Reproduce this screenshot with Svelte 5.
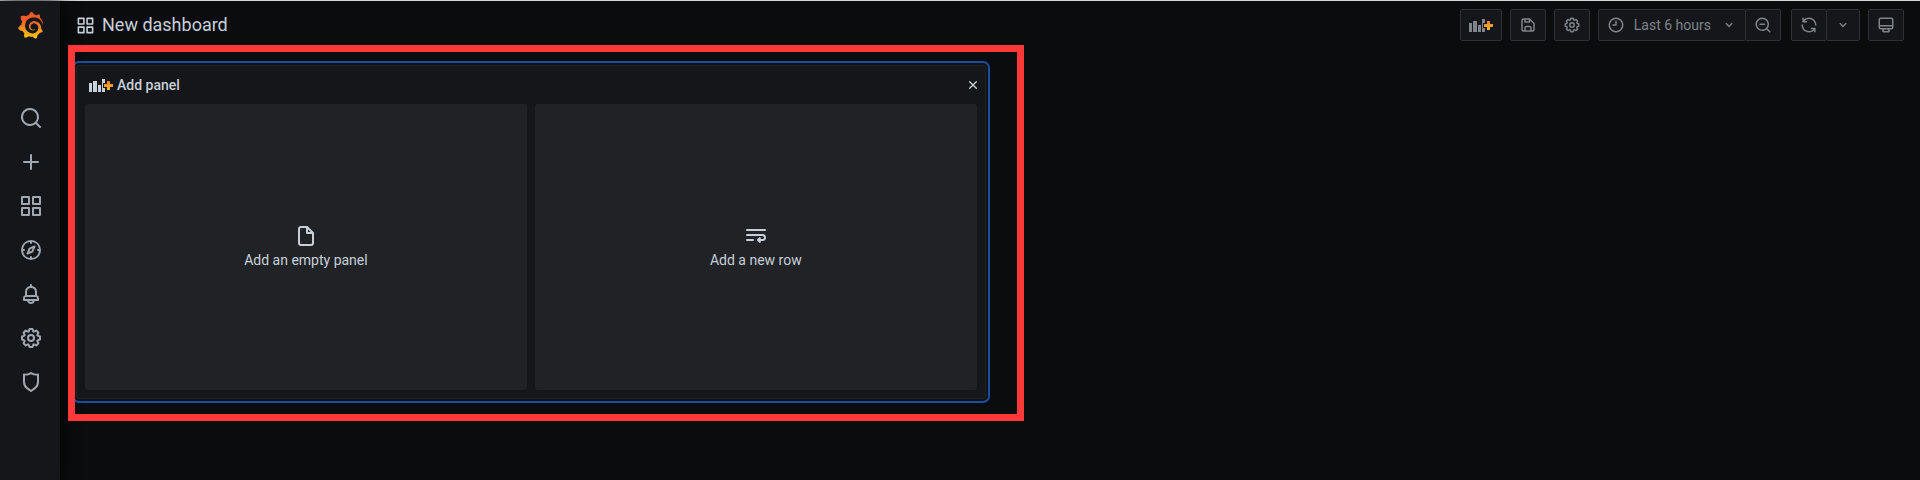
<script>
  const search = 'M21.71,20.29,18,16.61A9,9,0,1,0,16.61,18l3.68,3.68a1,1,0,0,0,1.42,0A1,1,0,0,0,21.71,20.29ZM11,18a7,7,0,1,1,7-7A7,7,0,0,1,11,18Z';
  const icons = {
    search,
    zoomOut: search + 'M14,10H8a1,1,0,0,0,0,2h6a1,1,0,0,0,0-2Z',
    plus: 'M19,11H13V5a1,1,0,0,0-2,0v6H5a1,1,0,0,0,0,2h6v6a1,1,0,0,0,2,0V13h6a1,1,0,0,0,0-2Z',
    apps: 'M10,13H3a1,1,0,0,0-1,1v7a1,1,0,0,0,1,1h7a1,1,0,0,0,1-1V14A1,1,0,0,0,10,13ZM9,20H4V15H9ZM21,2H14a1,1,0,0,0-1,1v7a1,1,0,0,0,1,1h7a1,1,0,0,0,1-1V3A1,1,0,0,0,21,2ZM20,9H15V4h5ZM21,13H14a1,1,0,0,0-1,1v7a1,1,0,0,0,1,1h7a1,1,0,0,0,1-1V14A1,1,0,0,0,21,13ZM20,20H15V15h5ZM10,2H3A1,1,0,0,0,2,3v7a1,1,0,0,0,1,1h7a1,1,0,0,0,1-1V3A1,1,0,0,0,10,2ZM9,9H4V4H9Z',
    compass: 'M12,2A10,10,0,1,0,22,12,10,10,0,0,0,12,2Zm1,17.93V19a1,1,0,0,0-2,0v.93A8,8,0,0,1,4.07,13H5a1,1,0,0,0,0-2H4.07A8,8,0,0,1,11,4.07V5a1,1,0,0,0,2,0V4.07A8,8,0,0,1,19.93,11H19a1,1,0,0,0,0,2h.93A8,8,0,0,1,13,19.93ZM15.14,7.55l-5,2.12a1,1,0,0,0-.52.52l-2.12,5a1,1,0,0,0,.21,1.1,1,1,0,0,0,.7.3.93.93,0,0,0,.4-.09l5-2.12a1,1,0,0,0,.52-.52l2.12-5a1,1,0,0,0-1.31-1.31Zm-2.49,5.1-2.28,1,1-2.28,2.28-1Z',
    bell: 'M18,13.18V10a6,6,0,0,0-5-5.91V3a1,1,0,0,0-2,0V4.09A6,6,0,0,0,6,10v3.18A3,3,0,0,0,4,16v2a1,1,0,0,0,1,1H8.14a4,4,0,0,0,7.72,0H19a1,1,0,0,0,1-1V16A3,3,0,0,0,18,13.18ZM8,10a4,4,0,0,1,8,0v3H8Zm4,10a2,2,0,0,1-1.72-1h3.44A2,2,0,0,1,12,20Zm6-3H6V16a1,1,0,0,1,1-1H17a1,1,0,0,1,1,1Z',
    cog: 'M21.32,9.55l-1.89-.63.89-1.78A1,1,0,0,0,20.13,6L18,3.87a1,1,0,0,0-1.15-.19l-1.78.89-.63-1.89A1,1,0,0,0,13.5,2h-3a1,1,0,0,0-.95.68L8.92,4.57,7.14,3.68A1,1,0,0,0,6,3.87L3.87,6a1,1,0,0,0-.19,1.15l.89,1.78-1.89.63A1,1,0,0,0,2,10.5v3a1,1,0,0,0,.68.95l1.89.63-.89,1.78A1,1,0,0,0,3.87,18L6,20.13a1,1,0,0,0,1.15.19l1.78-.89.63,1.89a1,1,0,0,0,.95.68h3a1,1,0,0,0,.95-.68l.63-1.89,1.78.89A1,1,0,0,0,18,20.13L20.13,18a1,1,0,0,0,.19-1.15l-.89-1.78,1.89-.63A1,1,0,0,0,22,13.5v-3A1,1,0,0,0,21.32,9.55ZM20,12.78l-1.2.4A2,2,0,0,0,17.64,16l.57,1.14-1.1,1.1L16,17.64a2,2,0,0,0-2.79,1.16l-.4,1.2H11.22l-.4-1.2A2,2,0,0,0,8,17.64l-1.14.57-1.1-1.1L6.36,16A2,2,0,0,0,5.2,13.18L4,12.78V11.22l1.2-.4A2,2,0,0,0,6.36,8L5.79,6.89l1.1-1.1L8,6.36A2,2,0,0,0,10.82,5.2l.4-1.2h1.56l.4,1.2A2,2,0,0,0,16,6.36l1.14-.57,1.1,1.1L17.64,8a2,2,0,0,0,1.16,2.79l1.2.4ZM12,8a4,4,0,1,0,4,4A4,4,0,0,0,12,8Zm0,6a2,2,0,1,1,2-2A2,2,0,0,1,12,14Z',
    shield: 'M19.63,3.65a1,1,0,0,0-.84-.2,8,8,0,0,1-6.22-1.27,1,1,0,0,0-1.14,0A8,8,0,0,1,5.21,3.45a1,1,0,0,0-.84.2A1,1,0,0,0,4,4.43v7.45a9,9,0,0,0,3.77,7.33l3.65,2.6a1,1,0,0,0,1.16,0l3.65-2.6A9,9,0,0,0,20,11.88V4.43A1,1,0,0,0,19.63,3.65ZM18,11.88a7,7,0,0,1-2.93,5.7L12,19.77,8.93,17.58A7,7,0,0,1,6,11.88V5.58a10,10,0,0,0,6-1.39,10,10,0,0,0,6,1.39Z',
    save: 'M20.71,9.29l-6-6a1,1,0,0,0-.32-.21A1.09,1.09,0,0,0,14,3H6A3,3,0,0,0,3,6V18a3,3,0,0,0,3,3H18a3,3,0,0,0,3-3V10A1,1,0,0,0,20.71,9.29ZM9,5h4V7H9Zm6,14H9V16a1,1,0,0,1,1-1h4a1,1,0,0,1,1,1Zm4-1a1,1,0,0,1-1,1H17V16a3,3,0,0,0-3-3H10a3,3,0,0,0-3,3v3H6a1,1,0,0,1-1-1V6A1,1,0,0,1,6,5H7V8A1,1,0,0,0,8,9h6a1,1,0,0,0,1-1V6.41l4,4Z',
    clock: 'M12,2A10,10,0,1,0,22,12,10,10,0,0,0,12,2Zm0,18a8,8,0,1,1,8-8A8,8,0,0,1,12,20ZM12,6a1,1,0,0,0-1,1v4H8a1,1,0,0,0,0,2h4a1,1,0,0,0,1-1V7A1,1,0,0,0,12,6Z',
    down: 'M17,9.17a1,1,0,0,0-1.41,0L12,12.71,8.46,9.17a1,1,0,0,0-1.41,0,1,1,0,0,0,0,1.42l4.24,4.24a1,1,0,0,0,1.42,0L17,10.59A1,1,0,0,0,17,9.17Z',
    sync: 'M19.91,15.51H15.38a1,1,0,0,0,0,2h2.4A8,8,0,0,1,4,12a1,1,0,0,0-2,0,10,10,0,0,0,16.88,7.23V21a1,1,0,0,0,2,0V16.5A1,1,0,0,0,19.91,15.51ZM12,2A10,10,0,0,0,5.12,4.77V3a1,1,0,0,0-2,0V7.5a1,1,0,0,0,1,1h4.5a1,1,0,0,0,0-2H6.22A8,8,0,0,1,20,12a1,1,0,0,0,2,0A10,10,0,0,0,12,2Z',
    monitor: 'M19,2H5A3,3,0,0,0,2,5V15a3,3,0,0,0,3,3H7.64l-.58,1a2,2,0,0,0,0,2,2,2,0,0,0,1.75,1h6.46A2,2,0,0,0,17,21a2,2,0,0,0,0-2l-.59-1H19a3,3,0,0,0,3-3V5A3,3,0,0,0,19,2ZM8.77,20,10,18H14l1.2,2ZM20,15a1,1,0,0,1-1,1H5a1,1,0,0,1-1-1V14H20Zm0-3H4V5A1,1,0,0,1,5,4H19a1,1,0,0,1,1,1Z',
    times: 'M13.41,12l4.3-4.29a1,1,0,1,0-1.42-1.42L12,10.59,7.71,6.29A1,1,0,0,0,6.29,7.71L10.59,12l-4.3,4.29a1,1,0,0,0,0,1.42,1,1,0,0,0,1.42,0L12,13.41l4.29,4.3a1,1,0,0,0,1.42,0,1,1,0,0,0,0-1.42Z',
    file: 'M20,8.94a1.31,1.31,0,0,0-.06-.27l0-.09a1.07,1.07,0,0,0-.19-.28h0l-6-6h0a1.07,1.07,0,0,0-.28-.19.32.32,0,0,0-.09,0A.88.88,0,0,0,13.05,2H7A3,3,0,0,0,4,5V19a3,3,0,0,0,3,3H17a3,3,0,0,0,3-3V9S20,9,20,8.94ZM14,5.41,16.59,8H14ZM18,19a1,1,0,0,1-1,1H7a1,1,0,0,1-1-1V5A1,1,0,0,1,7,4h5V9a1,1,0,0,0,1,1h5Z',
    wrap: 'M3,7H21a1,1,0,0,0,0-2H3A1,1,0,0,0,3,7ZM9,15H3a1,1,0,0,0,0,2H9a1,1,0,0,0,0-2ZM18.5,10H3a1,1,0,0,0,0,2H18.5a1.5,1.5,0,0,1,0,3H16.4l.3-.3a1,1,0,0,0-1.4-1.4l-2,2a1,1,0,0,0,0,1.4l2,2a1,1,0,0,0,1.4-1.4l-.3-.3h2.1a3.5,3.5,0,0,0,0-7Z'
  };

  const nav = [
    ['search', 'Search'],
    ['plus', 'Create'],
    ['apps', 'Dashboards'],
    ['compass', 'Explore'],
    ['bell', 'Alerting'],
    ['cog', 'Configuration'],
    ['shield', 'Server Admin']
  ];

  const choices = [
    ['file', 'Add an empty panel'],
    ['wrap', 'Add a new row']
  ];
</script>

{#snippet icon(name, size)}
  <svg width={size} height={size} viewBox="0 0 24 24" fill="currentColor" aria-hidden="true"><path d={icons[name]} /></svg>
{/snippet}

{#snippet panelAdd()}
  <svg width="24" height="14" viewBox="0 0 24 14" aria-hidden="true">
    <path fill="currentColor" d="M0 5h3v9H0zM4 3h4v11H4zM9 7h3v7H9zM13 1h3v4h-2v5h2v4h-3z" />
    <path fill="url(#plus-fill)" d="M18 3h3v3h3v3h-3v3h-3V9h-3V6h3z" />
  </svg>
{/snippet}

<div class="app">
  <nav class="sidebar" aria-label="Main">
    <a class="logo" href="#home" aria-label="Home">
      <svg width="25" height="27" viewBox="8 6 335 362" aria-hidden="true">
        <defs>
          <linearGradient id="logo-fill" gradientUnits="userSpaceOnUse" x1="175" y1="445" x2="175" y2="114">
            <stop offset="0" stop-color="#fff100" />
            <stop offset="1" stop-color="#f05a28" />
          </linearGradient>
          <linearGradient id="plus-fill" x1="0" y1="0" x2="0" y2="1">
            <stop offset="0" stop-color="#f2762e" />
            <stop offset="1" stop-color="#fbc02a" />
          </linearGradient>
        </defs>
        <path fill="url(#logo-fill)" d="M342,161.2c-0.6-6.1-1.6-13.1-3.6-20.9c-2-7.7-5-16.2-9.4-25c-4.4-8.8-10.1-17.9-17.5-26.8c-2.9-3.5-6.1-6.9-9.5-10.2c5.1-20.3-6.2-37.9-6.2-37.9c-19.5-1.2-31.9,6.1-36.5,9.4c-0.8-0.3-1.5-0.7-2.3-1c-3.3-1.3-6.7-2.6-10.3-3.7c-3.5-1.1-7.1-2.1-10.8-3c-3.7-0.9-7.4-1.6-11.2-2.2c-0.7-0.1-1.3-0.2-2-0.3c-8.5-27.2-32.9-38.6-32.9-38.6c-27.3,17.3-32.4,41.5-32.4,41.5s-0.1,0.5-0.3,1.4c-1.5,0.4-3,0.9-4.5,1.3c-2.1,0.6-4.2,1.4-6.2,2.2c-2.1,0.8-4.1,1.6-6.2,2.5c-4.1,1.8-8.2,3.8-12.2,6c-3.9,2.2-7.7,4.6-11.4,7.1c-0.5-0.2-1-0.4-1-0.4c-37.8-14.4-71.3,2.9-71.3,2.9c-3.1,40.2,15.1,65.5,18.7,70.1c-0.9,2.5-1.7,5-2.5,7.5c-2.8,9.1-4.9,18.4-6.2,28.1c-0.2,1.4-0.4,2.8-0.5,4.2C18.8,192.7,8.5,228,8.5,228c29.1,33.5,63.1,35.6,63.1,35.6c0,0,0.1-0.1,0.1-0.1c4.3,7.7,9.3,15,14.9,21.9c2.4,2.9,4.8,5.6,7.4,8.3c-10.6,30.4,1.5,55.6,1.5,55.6c32.4,1.2,53.7-14.2,58.2-17.7c3.2,1.1,6.5,2.1,9.8,2.9c10,2.6,20.2,4.1,30.4,4.5c2.5,0.1,5.1,0.2,7.6,0.1l5.2-0.1c15.3,21.8,42.1,24.9,42.1,24.9c19.1-20.1,20.2-40.1,20.2-44.4l0-1.8c4-2.8,7.8-5.8,11.4-9.1c7.6-6.9,14.3-14.8,19.9-23.3c0.5-0.8,1-1.6,1.5-2.4c21.6,1.2,36.9-13.4,36.9-13.4c-3.6-22.5-16.4-33.5-19.1-35.6l-1-0.7c0.1-1.4,0.2-2.7,0.3-4.1c0.2-2.4,0.2-4.9,0.2-7.3l0-3.8l-0.2-3.5c0-0.7-0.1-1.3-0.2-1.9l-0.4-3.8l-0.3-1.9c-0.4-2.5-0.8-4.9-1.4-7.4c-2.3-9.7-6.1-18.9-11-27.2c-5-8.3-11.2-15.6-18.3-21.8c-7-6.2-14.9-11.2-23.1-14.9c-8.3-3.7-16.9-6.1-25.5-7.2c-4.3-0.6-8.6-0.8-12.9-0.7l-3.2,0l-3.3,0.2c-2.2,0.2-4.4,0.5-6.5,0.9c-8.6,1.6-16.7,4.7-23.8,9c-7.1,4.3-13.3,9.6-18.3,15.6c-5,6-8.9,12.7-11.6,19.6c-2.7,6.9-4.2,14.1-4.6,21c-0.1,1.7-0.1,3.5-0.1,5.2l0.1,2.7c0.1,0.8,0.1,1.7,0.2,2.5c0.3,3.5,1,6.9,1.9,10.1c1.9,6.5,4.9,12.4,8.6,17.4c3.7,5,8.2,9.1,12.9,12.4c4.7,3.2,9.8,5.5,14.8,7c5,1.5,10,2.1,14.7,2.1c2.3,0,3.4,0,5.9-0.3c2.2-0.3,4.2-0.6,6.4-1.2c5-1.4,9.5-3.6,13.8-6.4c1.6-1.3,1.9-3.7,0.6-5.3c-1.1-1.4-3.1-1.8-4.7-0.9c-1.8,0.9-3.5,1.7-5.5,2.4c-3.1,1-6.2,1.5-9.7,1.6c-2.8,0-4-0.1-6.2-0.4c-3.7-0.5-7.4-1.6-10.9-3.2c-3.6-1.6-7-3.8-10.1-6.6c-3.1-2.8-5.8-6.1-7.9-9.9c-2.1-3.8-3.6-8-4.3-12.4c-0.3-2.2-0.5-4.5-0.4-6.7c0.1-2.4,0.3-4.6,0.7-7.1c1.7-9.6,6.5-19,13.9-26.1c1.9-1.8,3.9-3.4,6-4.9c2.1-1.5,4.4-2.8,6.8-3.9c2.4-1.1,4.8-2,7.4-2.7c2.5-0.7,5.1-1.1,7.8-1.4c1.3-0.1,2.6-0.2,4-0.2l4.2,0.1c2.9,0.2,5.7,0.6,8.5,1.3c5.6,1.2,11.1,3.3,16.2,6.1c10.2,5.7,18.9,14.5,24.2,25.1c2.7,5.3,4.6,11,5.5,16.9c0.2,1.5,0.4,3,0.5,4.5l0.2,2.2l0,4.3c0,0.7-0.1,1.9-0.1,2.6c-0.5,5.1-1.2,9.8-2.4,14.4c-0.8,3.1-1.8,6.2-3,9.3c-2.4,6-5.6,11.8-9.4,17.1c-7.7,10.6-18.2,19.2-30.2,24.7c-6,2.7-12.3,4.7-18.8,5.7c-3.2,0.6-6.5,0.9-9.8,1l-5,0c-1.8,0-3.5-0.1-5.3-0.3c-7-0.5-13.9-1.8-20.7-3.7c-6.7-1.9-13.2-4.6-19.4-7.8c-12.3-6.6-23.4-15.6-32-26.5c-4.3-5.4-8.1-11.3-11.2-17.4c-3.1-6.1-5.6-12.6-7.4-19.1c-1.8-6.6-2.9-13.3-3.4-20.1l-0.1-8.3c0.1-3.3,0.4-6.8,0.8-10.2c0.4-3.4,1-6.9,1.7-10.3c0.7-3.4,1.5-6.8,2.5-10.2c1.9-6.7,4.3-13.2,7.1-19.3c5.7-12.2,13.1-23.1,22-31.8c2.2-2.2,4.5-4.2,6.9-6.2c2.4-1.9,4.9-3.7,7.5-5.4c2.5-1.7,5.2-3.2,7.9-4.6c7.5-3.8,10.5-4.8,17-6.9c9-2.6,15-4,24-5.1c7-0.8,11-1,16.6-1.1c2.9-0.1,5.9-0.1,8.8,0c5.8,0.2,11.5,0.9,17,1.9c11.1,2.1,21.5,5.6,31,10.3c9.5,4.6,17.9,10.3,25.3,16.5c3.6,3.2,6.9,6.2,10.2,9.7c3.1,3.3,6,6.6,8.6,10c5.2,6.7,9.4,13.5,12.7,19.9c1.8,3.6,3,6.2,4.4,9.4c1.2,3,2.4,5.9,3.3,8.6c1.5,4.4,2.6,8.3,3.5,11.7c0.3,1.4,1.6,2.3,3,2.1c1.5-0.1,2.6-1.3,2.6-2.8C342.6,170.4,342.5,166.1,342,161.2z" />
      </svg>
    </a>
    {#each nav as [name, label]}
      <a class="nav-item" href={'#' + name} aria-label={label}>{@render icon(name, 24)}</a>
    {/each}
  </nav>

  <div class="page">
    <header>
      <h1>{@render icon('apps', 19)}<span>New dashboard</span></h1>
      <div class="toolbar">
        <button class="wide" aria-label="Add panel">{@render panelAdd()}</button>
        <button aria-label="Save dashboard">{@render icon('save', 18)}</button>
        <button aria-label="Dashboard settings">{@render icon('cog', 18)}</button>
        <div class="group">
          <button class="range">{@render icon('clock', 18)}<span>Last 6 hours</span>{@render icon('down', 16)}</button>
          <button aria-label="Zoom out">{@render icon('zoomOut', 18)}</button>
        </div>
        <div class="group">
          <button aria-label="Refresh">{@render icon('sync', 18)}</button>
          <button class="narrow" aria-label="Refresh interval">{@render icon('down', 16)}</button>
        </div>
        <button aria-label="Cycle view mode">{@render icon('monitor', 18)}</button>
      </div>
    </header>

    <main>
      <div class="highlight">
        <section class="panel">
          <div class="panel-head">
            {@render panelAdd()}
            <h2>Add panel</h2>
            <button class="close" aria-label="Close">{@render icon('times', 16)}</button>
          </div>
          <div class="choices">
            {#each choices as [name, label]}
              <button class="choice">{@render icon(name, 24)}<span>{label}</span></button>
            {/each}
          </div>
        </section>
      </div>
    </main>
  </div>
</div>

<style>
  :global(body) {
    margin: 0;
    background: #0b0c0e;
  }
  .app {
    box-sizing: border-box;
    display: flex;
    min-height: 100vh;
    border-top: 1px solid #d5dbdc;
    font: 14px/20px Roboto, sans-serif;
    color: #c7d0d9;
  }
  svg {
    display: block;
    flex: none;
  }
  button {
    box-sizing: border-box;
    margin: 0;
    padding: 0;
    border: 0;
    background: none;
    font: inherit;
    color: inherit;
    cursor: pointer;
  }
  .sidebar {
    box-sizing: border-box;
    flex: none;
    display: flex;
    flex-direction: column;
    width: 60px;
    padding: 11px 0 0 2px;
    background: #141619;
    color: #9fa7b3;
    box-shadow: 0 0 20px #000;
  }
  .logo {
    display: flex;
    padding-left: 16px;
    margin-bottom: 57px;
  }
  .nav-item {
    display: flex;
    align-items: center;
    justify-content: center;
    height: 44px;
    color: inherit;
  }
  .page {
    flex: 1;
    min-width: 0;
  }
  header {
    display: flex;
    align-items: center;
    justify-content: space-between;
    padding: 8px 16px 4px;
  }
  h1 {
    display: flex;
    align-items: center;
    gap: 7px;
    margin: 0;
    font-size: 18px;
    line-height: 24px;
    font-weight: 400;
  }
  .toolbar {
    display: flex;
    gap: 8px;
    color: #7f848b;
  }
  .toolbar button {
    display: flex;
    align-items: center;
    justify-content: center;
    width: 36px;
    height: 32px;
    border: 1px solid #2c3235;
    border-radius: 2px;
    background: #141619;
  }
  .toolbar .wide {
    width: 42px;
  }
  .toolbar .narrow {
    width: 34px;
  }
  .toolbar .range {
    width: auto;
    gap: 9px;
    padding: 0 8px;
  }
  .range span {
    margin-right: 1px;
  }
  .group {
    display: flex;
  }
  .group + .group {
    margin-left: 2px;
  }
  .group button + button {
    margin-left: -1px;
  }
  main {
    padding: 0 14px 0 8px;
  }
  .highlight {
    box-sizing: border-box;
    width: 52%;
    border: 7px solid #fd3838;
    padding: 13px 31px 15px 1px;
    overflow: hidden;
  }
  .panel {
    padding: 8px 4px;
    border: 1px solid #202226;
    border-radius: 3px;
    background: #141619;
    box-shadow: 0 0 0 2px #111215, 0 0 0 4px #1a4e9e;
  }
  .panel-head {
    display: flex;
    align-items: center;
    gap: 4px;
    height: 22px;
    padding: 0 0 8px 8px;
  }
  h2 {
    flex: 1;
    margin: 0;
    font-size: 14px;
    line-height: 20px;
    font-weight: 500;
  }
  .choices {
    display: grid;
    grid-template-columns: 1fr 1fr;
    gap: 8px;
    padding: 0 4px;
  }
  .choice {
    display: flex;
    flex-direction: column;
    align-items: center;
    justify-content: center;
    gap: 2px;
    height: 286px;
    border-radius: 3px;
    background: #202226;
  }
</style>
